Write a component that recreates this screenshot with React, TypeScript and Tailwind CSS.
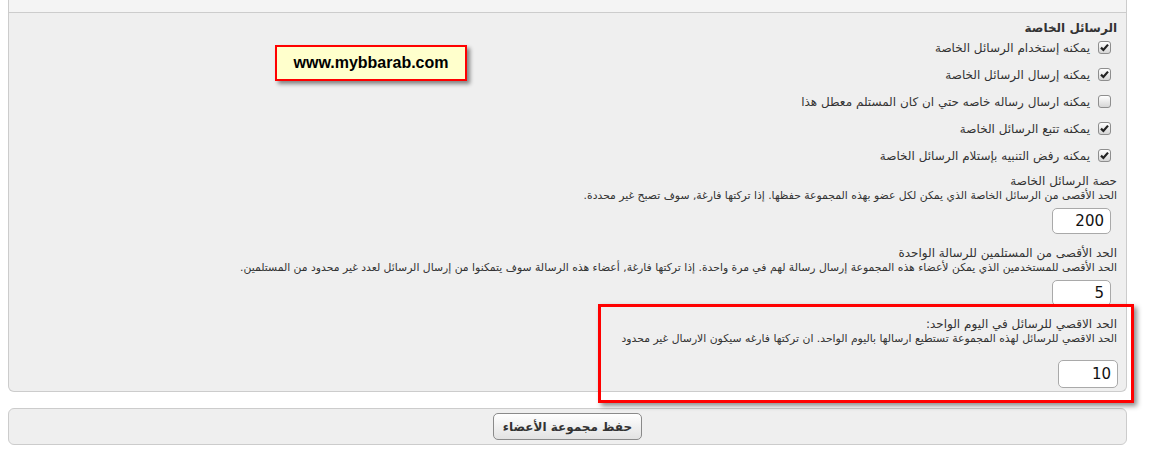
import { useState } from 'react'

const arabic = "font-['Tahoma','DejaVu_Sans',sans-serif]"

const options = [
  { label: 'يمكنه إستخدام الرسائل الخاصة', checked: true },
  { label: 'يمكنه إرسال الرسائل الخاصة', checked: true },
  { label: 'يمكنه ارسال رساله خاصه حتي ان كان المستلم معطل هذا', checked: false },
  { label: 'يمكنه تتبع الرسائل الخاصة', checked: true },
  { label: 'يمكنه رفض التنبيه بإستلام الرسائل الخاصة', checked: true },
]

const CheckBox = ({ checked, onClick }: { checked: boolean; onClick: () => void }) => (
  <span
    onClick={onClick}
    className="flex h-[13px] w-[13px] shrink-0 items-center justify-center rounded-[3px] border border-[#8e8e8e] bg-gradient-to-b from-[#ffffff] to-[#d6d6d6]"
  >
    {checked && (
      <svg width="9" height="9" viewBox="0 0 9 9">
        <path d="M1 4.6 L3.4 7 L8 1.6" fill="none" stroke="#222" strokeWidth="2.2" />
      </svg>
    )}
  </span>
)

const Field = ({
  title,
  desc,
  value,
  inputClass,
}: {
  title: string
  desc: string
  value: string
  inputClass: string
}) => (
  <div className="flex flex-col">
    <div className="h-[16px] text-[12px] leading-[16px] text-[#333]">{title}</div>
    <div className="h-[14px] whitespace-nowrap text-[10.8px] leading-[14px] text-[#333]">{desc}</div>
    <input
      defaultValue={value}
      className={`text-right rounded-[5px] border border-[#a9a9a9] bg-white px-[6px] text-[15px] text-[#111] outline-none font-['Tahoma','DejaVu_Sans',sans-serif] ${inputClass}`}
    />
  </div>
)

export default function App() {
  const [checks, setChecks] = useState(options.map((o) => o.checked))

  return (
    <div className={`relative h-[452px] w-[1167px] bg-white ${arabic}`}>
      <div dir="rtl" className="ml-[8px] w-[1119px] rounded-b-[6px] border-x border-b border-[#cccccc] bg-[#efefef]">
        <div className="h-[13px] border-b border-[#cccccc] bg-[#f4f4f4]" />
        <div className="flex flex-col pr-[9px] pt-[7px]">
          <div className="h-[16px] text-[12px] font-bold leading-[16px] text-[#333]">الرسائل الخاصة</div>
          <div className="-mt-[2px] flex flex-col">
            {options.map((o, i) => (
              <label key={o.label} className="flex h-[27px] items-center gap-[8px] pr-[6px] text-[12px] text-[#333]">
                <CheckBox
                  checked={checks[i]}
                  onClick={() => setChecks(checks.map((c, j) => (j === i ? !c : c)))}
                />
                <span>{o.label}</span>
              </label>
            ))}
          </div>
          <div className="mt-[4px]">
            <Field
              title="حصة الرسائل الخاصة"
              desc="الحد الأقصى من الرسائل الخاصة الذي يمكن لكل عضو بهذه المجموعة حفظها. إذا تركتها فارغة, سوف تصبح غير محددة."
              value="200"
              inputClass="mt-[5px] mr-[6px] h-[26px] w-[59px]"
            />
          </div>
          <div className="mt-[11px]">
            <Field
              title="الحد الأقصى من المستلمين للرسالة الواحدة"
              desc="الحد الأقصى للمستخدمين الذي يمكن لأعضاء هذه المجموعة إرسال رسالة لهم في مرة واحدة. إذا تركتها فارغة, أعضاء هذه الرسالة سوف يتمكنوا من إرسال الرسائل لعدد غير محدود من المستلمين."
              value="5"
              inputClass="mt-[5px] mr-[6px] h-[26px] w-[59px]"
            />
          </div>
          <div className="mt-[10px] pb-[3px]">
            <Field
              title="الحد الاقصي للرسائل في اليوم الواحد:"
              desc="الحد الاقصي للرسائل لهذه المجموعة تستطيع ارسالها باليوم الواحد. ان تركتها فارغه سيكون الارسال غير محدود"
              value="10"
              inputClass="mt-[14px] -mr-[1px] h-[28px] w-[60px]"
            />
          </div>
        </div>
      </div>

      <div className="mt-[16px] ml-[8px] flex h-[37px] w-[1119px] items-center justify-center rounded-[6px] border border-[#cccccc] bg-[#efefef]">
        <button className="h-[27px] w-[149px] rounded-[5px] border border-[#8a8a8a] bg-gradient-to-b from-[#ffffff] to-[#e2e2e2] text-[12px] font-bold text-[#333]">
          حفظ مجموعة الأعضاء
        </button>
      </div>

      {/* annotation overlays */}
      <div className="absolute left-[275px] top-[45px] flex h-[36px] w-[192px] items-center justify-center border-2 border-[#ff0000] bg-[#ffffcc] shadow-[3px_3px_4px_rgba(0,0,0,0.45)]">
        <span className="font-['Liberation_Sans',Arial,sans-serif] text-[16px] font-bold text-black">www.mybbarab.com</span>
      </div>
      <div className="pointer-events-none absolute left-[598px] top-[304px] h-[99px] w-[536px] border-[3px] border-[#ff0000] shadow-[3px_3px_5px_rgba(0,0,0,0.45)]" />
    </div>
  )
}
